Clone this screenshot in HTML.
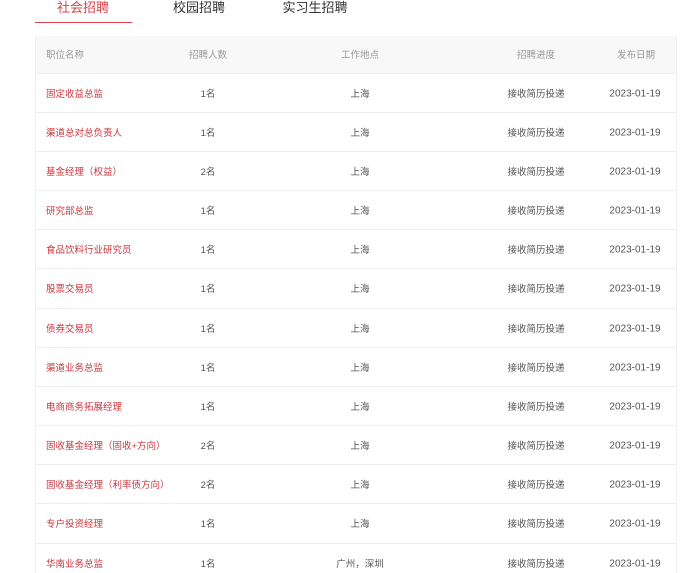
<!DOCTYPE html>
<html><head><meta charset="utf-8"><style>
*{margin:0;padding:0;box-sizing:border-box}
html,body{width:700px;height:573px;overflow:hidden}
body{background:#fff;font-family:"Liberation Sans","Noto Sans CJK SC",sans-serif;position:relative}
.tab{position:absolute;top:0;font-size:13px;color:#333;line-height:16px;transform:translateX(-50%);white-space:nowrap}
.ul{position:absolute;left:35px;top:22px;width:97px;height:1px;background:#d9434b}
.tbl{position:absolute;left:35px;top:36px;width:642px;height:537px;overflow:hidden;border-left:1px solid #f0f0f0;border-right:1px solid #f0f0f0}
.r{position:absolute;left:0;right:0;height:39.17px;border-bottom:1px solid #eee;font-size:9.5px;color:#555}
.h{top:0;height:37.5px;background:#f8f8f8;color:#999}
.r span{position:absolute;top:50%;transform:translate(-50%,-50%);white-space:nowrap}
.r span.d{font-size:10px;margin-top:1px}
.r span.n{left:10px;transform:translateY(-50%);color:#c8363e}
.h span.n{color:#999}
</style></head><body>
<div class="tab" style="left:83px;color:#d9434b">社会招聘</div>
<div class="tab" style="left:199px">校园招聘</div>
<div class="tab" style="left:315px">实习生招聘</div>
<div class="ul"></div>
<div class="tbl">
<div class="r h"><span class="n">职位名称</span><span style="left:172px">招聘人数</span><span style="left:324px">工作地点</span><span style="left:500px">招聘进度</span><span style="left:600px">发布日期</span></div>
<div class="r" style="top:37.5px"><span class="n">固定收益总监</span><span style="left:172px">1名</span><span style="left:324px">上海</span><span style="left:500px">接收简历投递</span><span class="d" style="left:599px">2023-01-19</span></div>
<div class="r" style="top:76.67px"><span class="n">渠道总对总负责人</span><span style="left:172px">1名</span><span style="left:324px">上海</span><span style="left:500px">接收简历投递</span><span class="d" style="left:599px">2023-01-19</span></div>
<div class="r" style="top:115.84px"><span class="n">基金经理（权益）</span><span style="left:172px">2名</span><span style="left:324px">上海</span><span style="left:500px">接收简历投递</span><span class="d" style="left:599px">2023-01-19</span></div>
<div class="r" style="top:155.01px"><span class="n">研究部总监</span><span style="left:172px">1名</span><span style="left:324px">上海</span><span style="left:500px">接收简历投递</span><span class="d" style="left:599px">2023-01-19</span></div>
<div class="r" style="top:194.18px"><span class="n">食品饮料行业研究员</span><span style="left:172px">1名</span><span style="left:324px">上海</span><span style="left:500px">接收简历投递</span><span class="d" style="left:599px">2023-01-19</span></div>
<div class="r" style="top:233.35px"><span class="n">股票交易员</span><span style="left:172px">1名</span><span style="left:324px">上海</span><span style="left:500px">接收简历投递</span><span class="d" style="left:599px">2023-01-19</span></div>
<div class="r" style="top:272.52px"><span class="n">债券交易员</span><span style="left:172px">1名</span><span style="left:324px">上海</span><span style="left:500px">接收简历投递</span><span class="d" style="left:599px">2023-01-19</span></div>
<div class="r" style="top:311.69px"><span class="n">渠道业务总监</span><span style="left:172px">1名</span><span style="left:324px">上海</span><span style="left:500px">接收简历投递</span><span class="d" style="left:599px">2023-01-19</span></div>
<div class="r" style="top:350.86px"><span class="n">电商商务拓展经理</span><span style="left:172px">1名</span><span style="left:324px">上海</span><span style="left:500px">接收简历投递</span><span class="d" style="left:599px">2023-01-19</span></div>
<div class="r" style="top:390.03px"><span class="n">固收基金经理（固收+方向）</span><span style="left:172px">2名</span><span style="left:324px">上海</span><span style="left:500px">接收简历投递</span><span class="d" style="left:599px">2023-01-19</span></div>
<div class="r" style="top:429.2px"><span class="n">固收基金经理（利率债方向）</span><span style="left:172px">2名</span><span style="left:324px">上海</span><span style="left:500px">接收简历投递</span><span class="d" style="left:599px">2023-01-19</span></div>
<div class="r" style="top:468.37px"><span class="n">专户投资经理</span><span style="left:172px">1名</span><span style="left:324px">上海</span><span style="left:500px">接收简历投递</span><span class="d" style="left:599px">2023-01-19</span></div>
<div class="r" style="top:507.54px"><span class="n">华南业务总监</span><span style="left:172px">1名</span><span style="left:324px">广州，深圳</span><span style="left:500px">接收简历投递</span><span class="d" style="left:599px">2023-01-19</span></div>
</div>
</body></html>
